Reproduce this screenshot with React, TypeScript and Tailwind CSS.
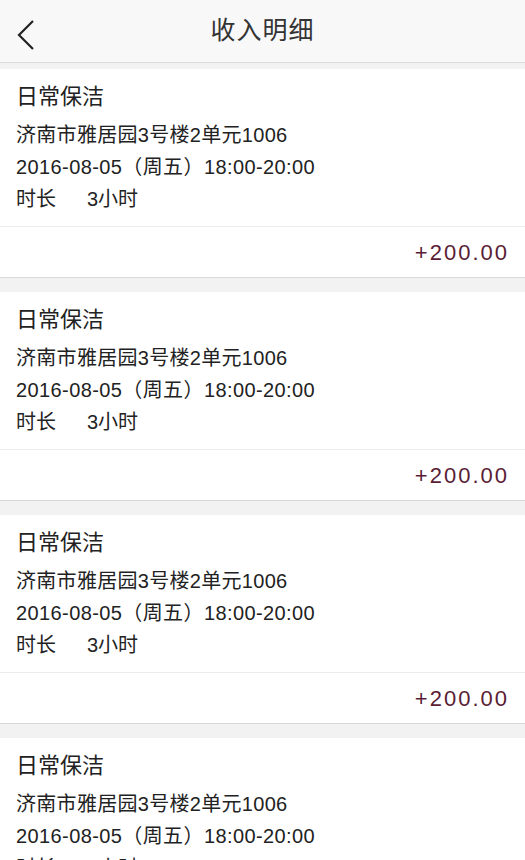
const items = Array.from({ length: 4 }, (_, i) => ({
  id: i,
  title: "日常保洁",
  address: "济南市雅居园3号楼2单元1006",
  time: "2016-08-05（周五）18:00-20:00",
  duration: "3小时",
  amount: "+200.00",
}));

const font = { fontFamily: '"Liberation Sans", "Noto Sans CJK SC", sans-serif' };

export default function App() {
  return (
    <main className="h-[860px] overflow-hidden bg-[#f2f2f2] text-[#222]" style={font}>
      <header className="relative flex h-[63px] items-center justify-center border-b border-[#dcdcdc] bg-[#f8f8f8]">
        <button type="button" className="absolute left-[12px] top-[15px] p-1">
          <svg width="20" height="32" viewBox="0 0 20 32" fill="none">
            <path d="M17 2 L3 16 L17 30" stroke="#222" strokeWidth="2.2" />
          </svg>
        </button>
        <h1 className="text-[25px] tracking-[1px] text-[#333]">收入明细</h1>
      </header>

      <div className="flex flex-col gap-[14px] pt-[6px]">
        {items.map((item) => (
          <section key={item.id} className="border-b border-[#d8d8d8] bg-white">
            <div className="border-b border-[#ececec] px-[16px] pb-[11px] pt-[12px]">
              <h2 className="text-[22px] leading-[32px]">{item.title}</h2>
              <p className="mt-[6px] text-[20px] leading-[32px] tracking-[0.3px]">{item.address}</p>
              <p className="text-[20px] leading-[32px] tracking-[0.4px]">{item.time}</p>
              <p className="text-[20px] leading-[32px]">
                时长<span className="ml-[31px]">{item.duration}</span>
              </p>
            </div>
            <div className="flex h-[50px] items-center justify-end pr-[16px]">
              <span className="text-[22px] tracking-[2px] text-[#5a1d35]">{item.amount}</span>
            </div>
          </section>
        ))}
      </div>
    </main>
  );
}
